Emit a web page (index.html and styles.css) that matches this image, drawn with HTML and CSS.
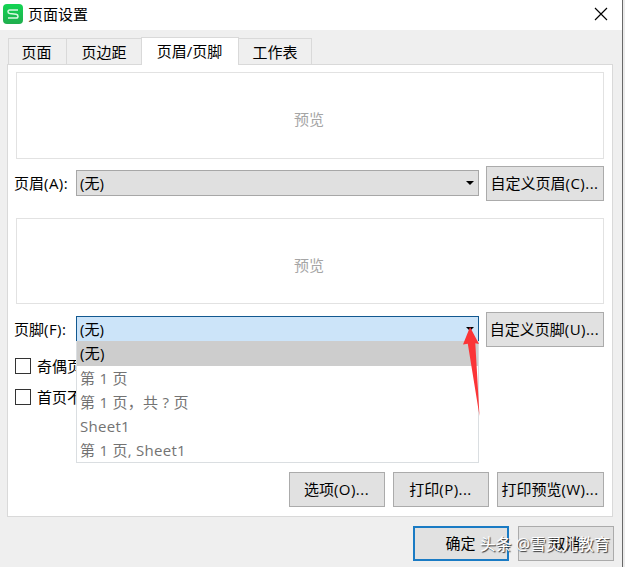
FILE: index.html
```html
<!DOCTYPE html>
<html lang="zh-CN">
<head>
<meta charset="utf-8">
<title>页面设置</title>
<link rel="stylesheet" href="styles.css">
</head>
<body>
<div class="dialog">
  <header class="titlebar">
    <svg class="logo" width="20" height="20" viewBox="0 0 20 20"><defs><linearGradient id="g" x2="0" y2="1"><stop stop-color="#13d553"/><stop offset="1" stop-color="#20ae4e"/></linearGradient></defs><rect width="20" height="20" rx="4" fill="url(#g)"/><path d="M15 6H6.8Q5 6 5 7.800Q5 9.300 6.800 9.600L13 10.300Q15 10.600 15 12.200Q15 14 13.200 14H5" fill="none" stroke="#d9f8e2" stroke-width="1.5"/></svg>
    <h1 class="title">页面设置</h1>
    <svg class="close" width="14" height="14" viewBox="0 0 14 14"><path d="M1 1L13 13M13 1L1 13" stroke="#000" stroke-width="1.15"/></svg>
  </header>
  <nav class="tabs">
    <div class="tab tab-page">页面</div>
    <div class="tab tab-margin">页边距</div>
    <div class="tab tab-active">页眉/页脚</div>
    <div class="tab tab-sheet">工作表</div>
  </nav>
  <main class="panel">
    <div class="preview">预览</div>
    <div class="row row-header">
      <span class="label">页眉<span class="latin">(A):</span></span>
      <div class="select"><span>(无)</span><i class="caret"></i></div>
      <div class="button custom"><span>自定义页眉<span class="latin">(C)...</span></span></div>
    </div>
    <div class="preview preview-footer">预览</div>
    <div class="row row-footer">
      <span class="label">页脚<span class="latin">(F):</span></span>
      <div class="select select-open"><span>(无)</span><i class="caret"></i>
        <div class="menu">
          <div class="option selected">(无)</div>
          <div class="option">第 1 页</div>
          <div class="option">第 1 页，共 ? 页</div>
          <div class="option">Sheet1</div>
          <div class="option">第 1 页, Sheet1</div>
        </div>
        <svg class="arrow" width="18" height="90" viewBox="0 0 18 90"><path d="M7 0L16 17L12.300 16.300L16.500 89L4.800 16.800L0 17.500Z" fill="#fb3537"/></svg>
      </div>
      <div class="button custom"><span>自定义页脚<span class="latin">(U)...</span></span></div>
    </div>
    <div class="checks">
      <div class="check"><i class="box"></i><span>奇偶页</span></div>
      <div class="check"><i class="box"></i><span>首页不</span></div>
    </div>
    <div class="actions">
      <div class="button"><span>选项<span class="latin">(O)...</span></span></div>
      <div class="button"><span>打印<span class="latin">(P)...</span></span></div>
      <div class="button wide"><span>打印预览<span class="latin">(W)...</span></span></div>
    </div>
  </main>
  <footer class="footer">
    <div class="button primary"><span>确定</span></div>
    <div class="button"><span>取消</span></div>
    <div class="watermark"><span>头条</span><span>@雪灵儿教育</span></div>
  </footer>
</div>
</body>
</html>
```
FILE: styles.css
```css
* { box-sizing: border-box; }
body {
  margin: 0;
  height: 567px;
  overflow: hidden;
  background: #ebebeb;
  color: #000;
  font: 15px/20px "Open Sans", "Noto Sans CJK SC", sans-serif;
  white-space: nowrap;
}
.dialog {
  width: 623px;
  height: 567px;
  background: #efefef;
  border-right: 1px solid #686868;
}
.titlebar {
  display: flex;
  align-items: center;
  height: 30px;
  padding: 0 14px 2px 3px;
  background: #fff;
}
.title { margin: 0 auto 0 5px; font-size: 15px; font-weight: 400; }
.tabs {
  display: flex;
  align-items: flex-end;
  height: 34px;
  padding-left: 8px;
}
.tab {
  height: 26px;
  border: 1px solid #d9d9d9;
  border-width: 1px 1px 0 0;
  line-height: 27px;
  text-align: center;
}
.tab-page { width: 59px; padding-right: 2px; border-left-width: 1px; }
.tab-margin { width: 74px; border-right: 0; }
.tab-active {
  position: relative;
  width: 98px;
  height: 28px;
  margin-bottom: -1px;
  padding-right: 1px;
  border-left-width: 1px;
  background: #fff;
  line-height: 26px;
}
.tab-sheet { width: 73px; }
.panel {
  width: 606px;
  height: 453px;
  margin-left: 7px;
  padding: 7px 8px;
  border: 1px solid #d9d9d9;
  background: #fff;
}
.preview {
  height: 87px;
  border: 1px solid #e2e2e2;
  color: #a5a5a5;
  line-height: 93px;
  text-align: center;
  padding-right: 2px;
}
.row { display: flex; align-items: center; height: 35px; }
.row-header { margin: 7px 0 17px; }
.row-footer { margin-top: 8px; }
.preview-footer { height: 86px; }
.label { width: 62px; margin: -2px 0 0 -2px; }
.latin { letter-spacing: 0.45px; }
.select {
  position: relative;
  display: flex;
  align-items: center;
  justify-content: space-between;
  width: 403px;
  height: 26px;
  margin: -2px 7px 0 0;
  padding: 0 4px 0 3px;
  border: 1px solid #a7a7a7;
  background: #e0e0e0;
}
.select-open { border-color: #125890; background: #cce4f9; }
.caret {
  border: solid transparent;
  border-width: 4px 4px 0;
  border-top-color: #000;
}
.button {
  display: flex;
  align-items: center;
  justify-content: center;
  width: 96px;
  height: 35px;
  padding: 0 1px 1px 0;
  border: 1px solid #ababab;
  background: #e1e1e1;
}
.custom { width: 118px; }
.menu {
  position: absolute;
  z-index: 1;
  top: 24px;
  left: -1px;
  width: 403px;
  height: 122px;
  border: 1px solid #dadee1;
  border-top: 0;
  background: #fff;
}
.option {
  height: 24px;
  padding-left: 3px;
  color: #737373;
  line-height: 24px;
  letter-spacing: 0.28px;
}
.selected { height: 25px; background: #cdcdcd; color: #000; line-height: 25px; }
.arrow { position: absolute; z-index: 2; top: 10px; right: -3px; }
.checks { display: flex; flex-direction: column; gap: 11px; margin: 9px 0 0 -1px; }
.check { display: flex; align-items: center; gap: 6px; height: 20px; }
.box { width: 16px; height: 16px; border: 1px solid #333; }
.actions { display: flex; justify-content: flex-end; gap: 8px; margin-top: 65px; }
.wide { width: 107px; }
.footer {
  position: relative;
  display: flex;
  justify-content: flex-end;
  gap: 9px;
  padding: 9px 8px 0 0;
}
.primary { border: 2px solid #1a7bc4; }
.watermark {
  position: absolute;
  top: 17px;
  right: 12px;
  display: flex;
  gap: 4px;
  color: #fff;
  font-size: 16px;
  text-shadow: 1px 1px 1px #333;
}
```
